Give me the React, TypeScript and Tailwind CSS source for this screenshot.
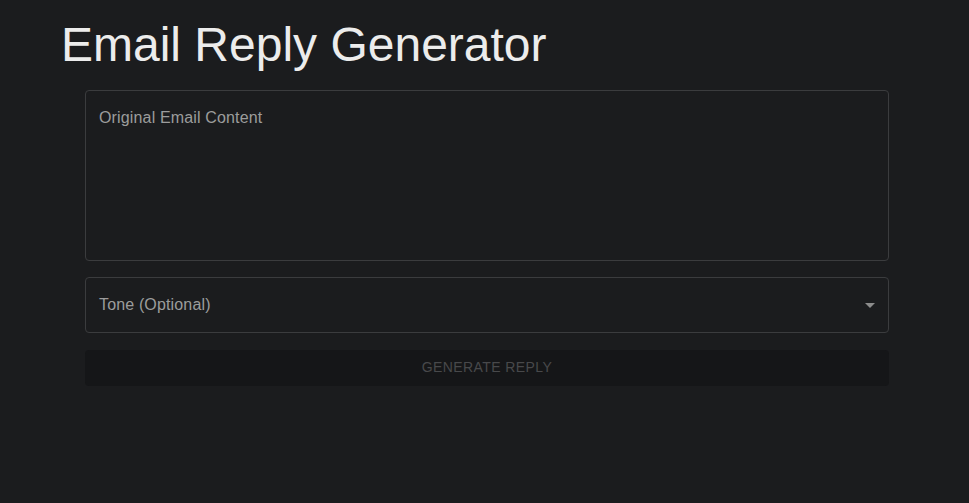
export default function App() {
  return (
    <div
      className="min-h-screen w-full bg-[#1b1c1e] px-[58px] pt-[17px]"
      style={{ fontFamily: '"Liberation Sans", Arial, sans-serif' }}
    >
      <h1 className="pl-[3px] text-[48px] leading-[56px] font-normal text-[#ececec] mb-[17px]">
        Email Reply Generator
      </h1>
      <div className="ml-[27px] w-[804px] flex flex-col">
        <textarea
          placeholder="Original Email Content"
          className="h-[171px] w-full resize-none rounded border border-[#3b3c3e] bg-transparent px-[13px] pt-[15px] text-[16px] leading-[23px] tracking-[0.15px] text-[#e0e0e0] placeholder:text-[#9c9c9c] outline-none"
        />
        <div className="mt-[16px] flex h-[56px] items-center justify-between rounded border border-[#3b3c3e] pl-[13px] pr-[13px]">
          <span className="text-[16px] tracking-[0.15px] text-[#9c9c9c]">Tone (Optional)</span>
          <svg width="10" height="5" viewBox="0 0 10 5" className="mt-[1px]">
            <path d="M0 0h10L5 5z" fill="#8c8c8c" />
          </svg>
        </div>
        <button
          disabled
          className="mt-[17px] h-[36px] w-full rounded bg-[#151618] pb-[2px] text-[14px] font-medium uppercase tracking-[0.4px] text-[#48494b]"
        >
          Generate Reply
        </button>
      </div>
    </div>
  );
}
